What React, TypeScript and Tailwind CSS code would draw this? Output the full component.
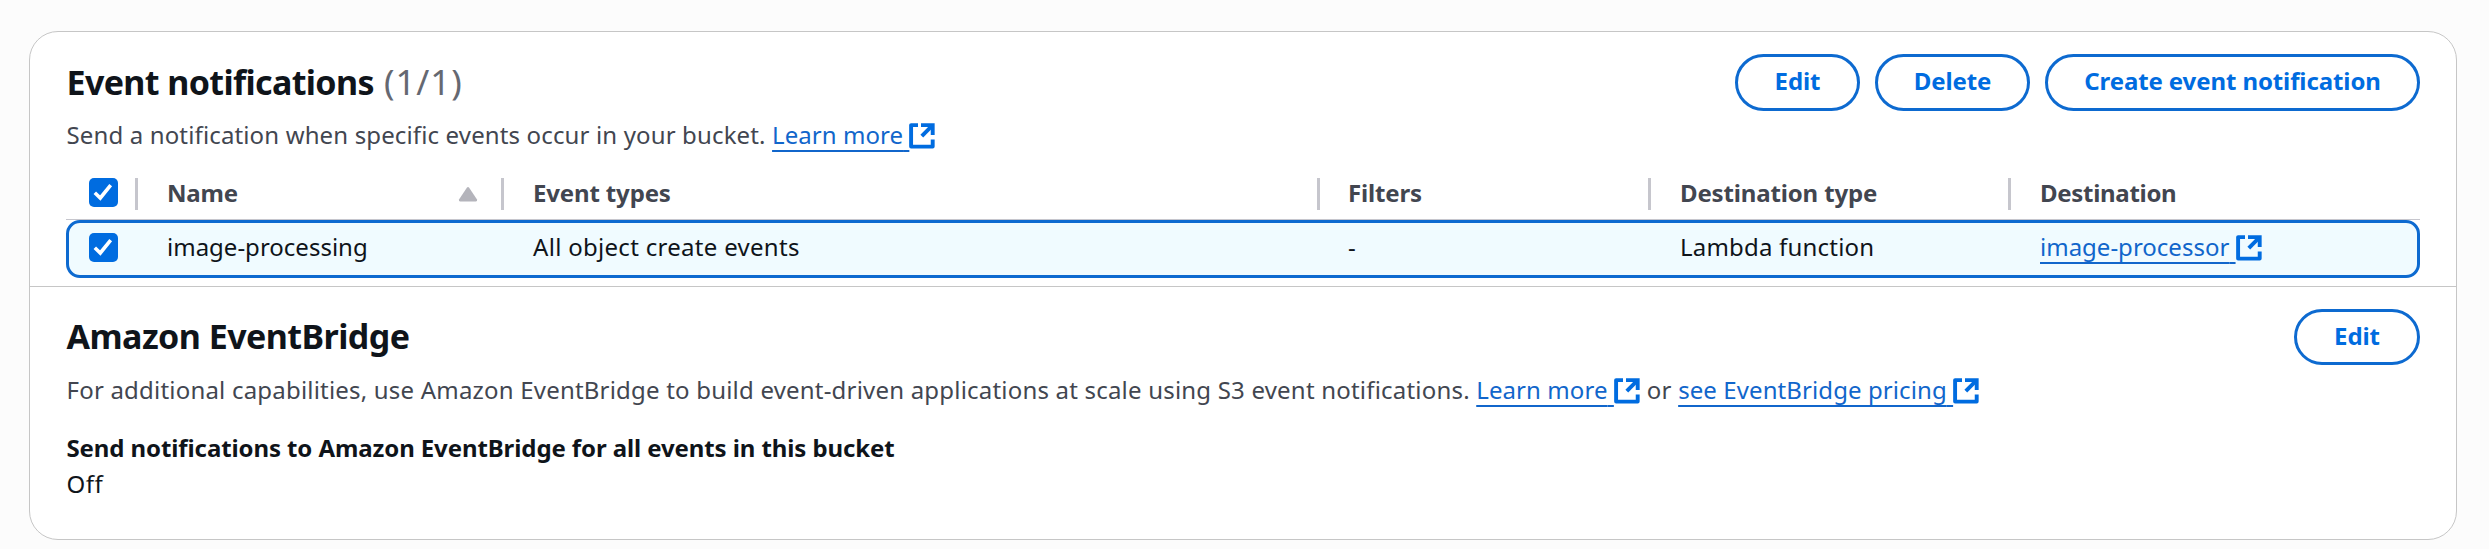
import type { ReactNode } from "react";

function ExternalIcon({ className = "" }: { className?: string }) {
  return (
    <svg viewBox="0 0 26 26" className={`h-[26px] w-[26px] shrink-0 ${className}`} fill="none" stroke="#006ce0" strokeWidth="3.9" strokeLinejoin="round">
      <path d="M9 2.1H2.1V23.6H23.7V16.4" />
      <path d="M12 2.1H23.7V12" strokeLinejoin="miter" />
      <path d="M23.2 2.6L12.8 13.2" />
    </svg>
  );
}

function ExternalLink({ children, className = "" }: { children: ReactNode; className?: string }) {
  return (
    <a className={`inline-flex items-start text-[#1166cb] ${className}`}>
      <span className="whitespace-pre underline decoration-2 underline-offset-[6px] [text-decoration-skip-ink:none]">{children}{" "}</span>
      <ExternalIcon className="mt-[3px]" />
    </a>
  );
}

function Button({ children, className }: { children: ReactNode; className: string }) {
  return (
    <button className={`flex items-center justify-center rounded-full border-[3px] border-[#0d6ad0] pb-[3px] font-bold text-[#006ce0] whitespace-nowrap ${className}`}>
      {children}
    </button>
  );
}

function Checkbox({ className = "" }: { className?: string }) {
  return (
    <span className={`flex h-[29px] w-[29px] rounded-[5px] bg-[#006ce0] ${className}`}>
      <svg viewBox="0 0 29 29" className="h-[29px] w-[29px]" fill="none" stroke="#fff" strokeWidth="3.6">
        <path d="M5.8 14.8L11.3 20L21.7 7.2" />
      </svg>
    </span>
  );
}

function HeaderCell({ children, last }: { children: ReactNode; last?: boolean }) {
  return (
    <div className="flex h-8 justify-between">
      {children}
      {!last && <span className="h-8 w-[3px] bg-[#c6c6cd]" />}
    </div>
  );
}

const columns = "grid grid-cols-[72px_366px_816px_331px_360px_1fr]";

export default function App() {
  return (
    <main className="h-[549px] w-[2489px] overflow-hidden bg-[#fcfcfc] pt-[31px] pl-[29px] font-['Noto_Sans',sans-serif] text-[24px] leading-[30px] text-[#0f141a]">
      <section className="h-[509px] w-[2428px] rounded-[29px] border border-[#c6c6c6] bg-white">
        <div className="h-[255px] border-b border-[#c6c6c6] pl-[36px] pr-[36px]">
          <header className="flex h-[88px] items-start justify-between pt-[22px]">
            <h2 className="-mt-[2px] pt-[7px] pl-[0.5px] text-[34px] leading-[46px] font-bold tracking-[-0.63px] whitespace-nowrap">
              Event notifications <span className="ml-[2px] text-[35px] font-normal tracking-[0.9px] text-[#656871]">(1/1)</span>
            </h2>
            <div className="flex gap-[15px]">
              <Button className="h-[57px] w-[125px] tracking-[-0.1px]">Edit</Button>
              <Button className="h-[57px] w-[155px] tracking-[-0.1px]">Delete</Button>
              <Button className="h-[57px] w-[375px] tracking-[-0.1px]">Create event notification</Button>
            </div>
          </header>
          <p className="flex h-[58px] pl-[0.5px] tracking-[0.14px] whitespace-pre text-[#424650]">
            Send a notification when specific events occur in your bucket.{" "}
            <ExternalLink className="tracking-[0.05px]">Learn more</ExternalLink>
          </p>
          <div className={`${columns} h-[42px] border-b border-[#c6c6cd] font-bold tracking-[-0.15px] text-[#424650]`}>
            <HeaderCell><Checkbox className="ml-[23px]" /></HeaderCell>
            <HeaderCell>
              <span className="flex-1 pl-[29px]">Name</span>
              <svg viewBox="0 0 20 16" className="mt-[8px] mr-[23px] h-4 w-5">
                <path d="M9 1.6Q10 .4 11 1.6L19 13.4Q19.6 15.5 17.8 15.5H2.2Q.4 15.5 1 13.4Z" fill="#b4b4bb" />
              </svg>
            </HeaderCell>
            <HeaderCell><span className="pl-[29px]">Event types</span></HeaderCell>
            <HeaderCell><span className="pl-[28px]">Filters</span></HeaderCell>
            <HeaderCell><span className="pl-[29px]">Destination type</span></HeaderCell>
            <HeaderCell last><span className="pl-[29px] tracking-[-0.3px]">Destination</span></HeaderCell>
          </div>
          <div className="h-[58px] w-[2354px] rounded-[14px] border-[3px] border-[#0d6ad0] bg-[#f0fbff]">
            <div className={`${columns} -mx-[3px] pt-[9px]`}>
              <Checkbox className="ml-[23px] mt-[1px]" />
              <span className="pl-[29px]">image-processing</span>
              <span className="pl-[29px] tracking-[0.3px]">All object create events</span>
              <span className="pl-[28px]">-</span>
              <span className="pl-[29px] tracking-[0.2px]">Lambda function</span>
              <span className="pl-[29px]"><ExternalLink>image-processor</ExternalLink></span>
            </div>
          </div>
        </div>
        <div className="pl-[36px] pr-[36px]">
          <header className="flex h-[88px] items-start justify-between pt-[22px]">
            <h2 className="pt-[4px] pl-[0.5px] text-[34px] leading-[46px] font-bold tracking-[-0.55px]">Amazon EventBridge</h2>
            <Button className="h-[56px] w-[126px] tracking-[-0.1px]">Edit</Button>
          </header>
          <p className="flex h-[58px] pl-[0.5px] tracking-[0.2px] whitespace-pre text-[#424650]">
            For additional capabilities, use Amazon EventBridge to build event-driven applications at scale using S3 event notifications.{" "}
            <ExternalLink className="tracking-[0.08px]">Learn more</ExternalLink>
            <span className="pl-[7px]">or </span>
            <ExternalLink className="tracking-[0.09px]">see EventBridge pricing</ExternalLink>
          </p>
          <div className="pl-[0.5px] font-bold tracking-[-0.1px]">Send notifications to Amazon EventBridge for all events in this bucket</div>
          <div className="mt-[6px] pl-[0.5px] tracking-[0.5px]">Off</div>
        </div>
      </section>
    </main>
  );
}
